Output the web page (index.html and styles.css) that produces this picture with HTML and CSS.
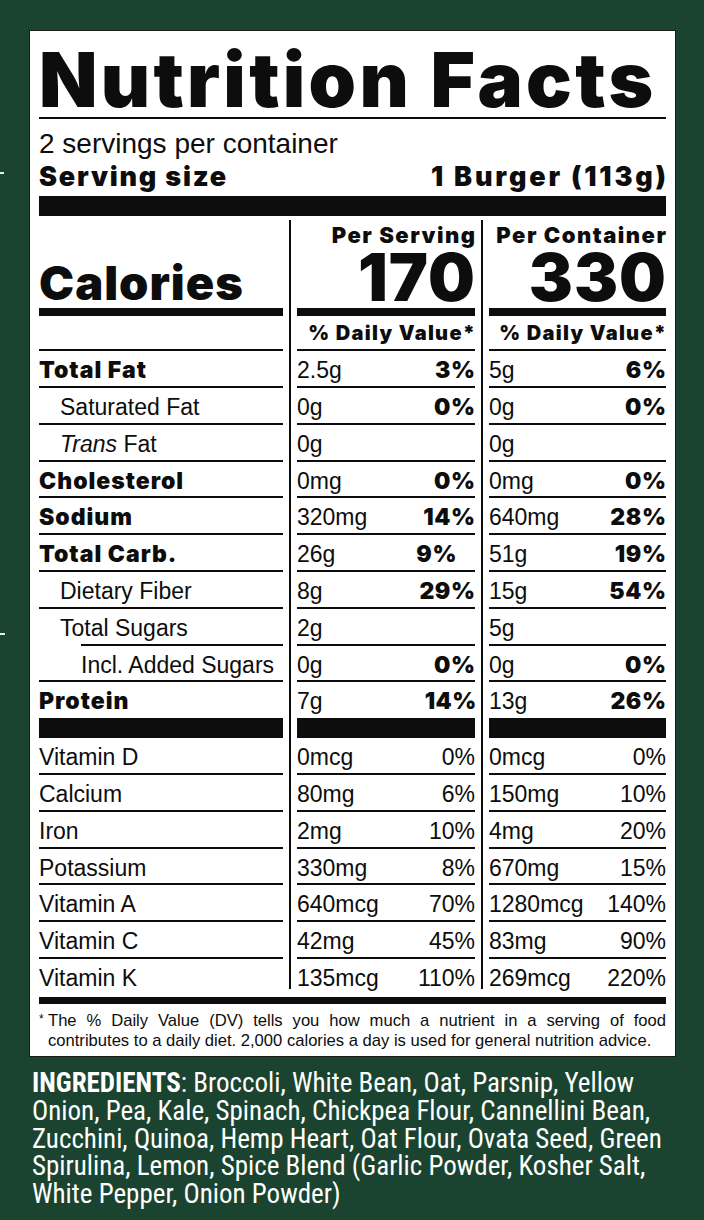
FILE: index.html
```html
<!DOCTYPE html>
<html lang="en">
<head>
<meta charset="utf-8">
<title>Nutrition Facts</title>
<link rel="stylesheet" href="styles.css">
</head>
<body>
<span class="speck speck-a"></span>
<span class="speck speck-b"></span>
<div class="label">
  <h1 class="title">Nutrition Facts</h1>
  <p class="servings">2 servings per container</p>
  <div class="serving-size"><span class="ss-name">Serving size</span><span class="ss-amount">1 Burger (113g)</span></div>
  <div class="bar-thick"></div>

  <div class="grid">
    <div class="sep sep1"></div>
    <div class="sep sep2"></div>

    <div class="cal-label">Calories</div>
    <div class="cal-head"><span class="per">Per Serving</span><span class="kcal">170</span></div>
    <div class="cal-head"><span class="per">Per Container</span><span class="kcal">330</span></div>

    <div class="barcell"></div><div class="barcell"></div><div class="barcell"></div>

    <div class="dv"></div>
    <div class="dv"><span class="dv-text">% Daily Value*</span></div>
    <div class="dv"><span class="dv-text">% Daily Value*</span></div>

    <div class="n b">Total Fat</div>
    <div class="v"><span>2.5g</span><span class="pct">3%</span></div>
    <div class="v"><span>5g</span><span class="pct">6%</span></div>

    <div class="n ind1">Saturated Fat</div>
    <div class="v"><span>0g</span><span class="pct">0%</span></div>
    <div class="v"><span>0g</span><span class="pct">0%</span></div>

    <div class="n ind1"><i>Trans</i> Fat</div>
    <div class="v"><span>0g</span></div>
    <div class="v"><span>0g</span></div>

    <div class="n b">Cholesterol</div>
    <div class="v"><span>0mg</span><span class="pct">0%</span></div>
    <div class="v"><span>0mg</span><span class="pct">0%</span></div>

    <div class="n b">Sodium</div>
    <div class="v"><span>320mg</span><span class="pct">14%</span></div>
    <div class="v"><span>640mg</span><span class="pct">28%</span></div>

    <div class="n b">Total Carb.</div>
    <div class="v"><span>26g</span><span class="pct pct-in">9%</span></div>
    <div class="v"><span>51g</span><span class="pct">19%</span></div>

    <div class="n ind1">Dietary Fiber</div>
    <div class="v"><span>8g</span><span class="pct">29%</span></div>
    <div class="v"><span>15g</span><span class="pct">54%</span></div>

    <div class="n ind1 line-ind">Total Sugars</div>
    <div class="v"><span>2g</span></div>
    <div class="v"><span>5g</span></div>

    <div class="n ind2">Incl. Added Sugars</div>
    <div class="v"><span>0g</span><span class="pct">0%</span></div>
    <div class="v"><span>0g</span><span class="pct">0%</span></div>

    <div class="n b nob">Protein</div>
    <div class="v nob"><span>7g</span><span class="pct pct-out">14%</span></div>
    <div class="v nob"><span>13g</span><span class="pct">26%</span></div>

    <div class="barcell"></div><div class="barcell"></div><div class="barcell"></div>

    <div class="n">Vitamin D</div>
    <div class="v"><span>0mcg</span><span>0%</span></div>
    <div class="v"><span>0mcg</span><span>0%</span></div>

    <div class="n">Calcium</div>
    <div class="v"><span>80mg</span><span>6%</span></div>
    <div class="v"><span>150mg</span><span>10%</span></div>

    <div class="n">Iron</div>
    <div class="v"><span>2mg</span><span>10%</span></div>
    <div class="v"><span>4mg</span><span>20%</span></div>

    <div class="n">Potassium</div>
    <div class="v"><span>330mg</span><span>8%</span></div>
    <div class="v"><span>670mg</span><span>15%</span></div>

    <div class="n">Vitamin A</div>
    <div class="v"><span>640mcg</span><span>70%</span></div>
    <div class="v"><span>1280mcg</span><span>140%</span></div>

    <div class="n">Vitamin C</div>
    <div class="v"><span>42mg</span><span>45%</span></div>
    <div class="v"><span>83mg</span><span>90%</span></div>

    <div class="n nob">Vitamin K</div>
    <div class="v nob"><span>135mcg</span><span>110%</span></div>
    <div class="v nob"><span>269mcg</span><span>220%</span></div>
  </div>

  <div class="bar-bottom"></div>
  <p class="footnote">
    <span class="fn-l1"><span class="star">*</span>The % Daily Value (DV) tells you how much a nutrient in a serving of food</span>
    <span class="fn-l2">contributes to a daily diet. 2,000 calories a day is used for general nutrition advice.</span>
  </p>
</div>

<p class="ingredients"><span class="ing-line"><b>INGREDIENTS</b>: Broccoli, White Bean, Oat, Parsnip, Yellow</span><span class="ing-line">Onion, Pea, Kale, Spinach, Chickpea Flour, Cannellini Bean,</span><span class="ing-line">Zucchini, Quinoa, Hemp Heart, Oat Flour, Ovata Seed, Green</span><span class="ing-line">Spirulina, Lemon, Spice Blend (Garlic Powder, Kosher Salt,</span><span class="ing-line">White Pepper, Onion Powder)</span></p>
</body>
</html>
```

FILE: styles.css
```css
* {
  box-sizing: border-box;
  margin: 0;
  padding: 0;
}

html, body {
  width: 704px;
  height: 1220px;
}

body {
  position: relative;
  overflow: hidden;
  background: #1b4430;
  font-family: "Liberation Sans", Arial, sans-serif;
  color: #0d0d0d;
}

.speck {
  position: absolute;
  left: 0;
  height: 2px;
  background: #e6ede8;
}
.speck-a { top: 172px; width: 4px; }
.speck-b { top: 633px; width: 5px; }

.label {
  margin: 30px 0 0 29px;
  width: 647px;
  background: #fff;
  border: 1px solid #1a1a1a;
  padding: 10px 9px 6px 9px;
}

.title {
  font-family: "Inter", "Roboto", sans-serif;
  font-weight: 900;
  font-size: 76px;
  line-height: 76px;
  height: 78px;
  letter-spacing: 3.3px;
  white-space: nowrap;
  border-bottom: 2px solid #0d0d0d;
}

.servings {
  margin-top: 11px;
  font-size: 28px;
  line-height: 28px;
}

.serving-size {
  margin-top: 6px;
  display: flex;
  justify-content: space-between;
  font-family: "Inter", "Roboto", sans-serif;
  font-weight: 900;
  font-size: 27px;
  line-height: 26px;
  white-space: nowrap;
}
.ss-name {
  letter-spacing: 1.8px;
}
.ss-amount {
  letter-spacing: 2.8px;
  margin-right: -2.8px;
}

.bar-thick {
  margin-top: 6px;
  height: 20px;
  background: #0d0d0d;
}

.grid {
  display: grid;
  grid-template-columns: 244px 14px 178px 14px 177px;
  grid-template-rows:
    92px 8px 35px
    37px 37px 37px 36px 37px 37px 37px 37px 36px
    36px 20px
    37px 37px 37px 36px 37px 37px 30px;
}

.sep {
  grid-row: 1 / -1;
  width: 2px;
  justify-self: center;
  margin-top: 4px;
  background: #0d0d0d;
}
.sep1 { grid-column: 2; }
.sep2 { grid-column: 4; }

.cal-label {
  display: flex;
  align-items: flex-end;
  padding-bottom: 2px;
  font-family: "Inter", "Roboto", sans-serif;
  font-weight: 900;
  font-size: 47px;
  line-height: 47px;
  letter-spacing: 1px;
}

.cal-head {
  display: flex;
  flex-direction: column;
  align-items: flex-end;
  padding-top: 7px;
  font-family: "Inter", "Roboto", sans-serif;
  font-weight: 900;
}
.per {
  display: block;
  font-size: 22px;
  line-height: 24px;
  letter-spacing: 1.5px;
  margin-right: -1.5px;
  white-space: nowrap;
}
.kcal {
  display: block;
  margin-top: 2px;
  font-size: 66px;
  line-height: 56px;
  letter-spacing: 1px;
  margin-right: -1px;
}

.barcell {
  background: #0d0d0d;
}

.dv {
  padding-top: 7px;
  text-align: right;
  font-family: "Inter", "Roboto", sans-serif;
  font-weight: 900;
  font-size: 20px;
  line-height: 20px;
  white-space: nowrap;
  border-bottom: 2px solid #0d0d0d;
}
.dv-text {
  letter-spacing: 1.3px;
  margin-right: -1.3px;
}

.n, .v {
  padding-top: 9px;
  font-size: 23px;
  line-height: 20px;
  white-space: nowrap;
  border-bottom: 2px solid #0d0d0d;
}

.v {
  display: flex;
  justify-content: space-between;
}

.b, .pct {
  font-family: "Inter", "Roboto", sans-serif;
  font-weight: 900;
}
.b {
  letter-spacing: 1px;
}
.pct {
  letter-spacing: 0.6px;
  margin-right: -0.6px;
}

.ind1 { padding-left: 21px; }
.ind2 { padding-left: 42px; }

.line-ind {
  border-bottom: none;
  background: linear-gradient(#0d0d0d, #0d0d0d) no-repeat right bottom / calc(100% - 42px) 2px;
}

.pct-in { margin-right: 18px; }
.pct-out { margin-right: -2px; }

.nob { border-bottom: none; }

.bar-bottom {
  margin-top: 8px;
  height: 7px;
  background: #0d0d0d;
}

.footnote {
  margin-top: 6px;
  font-size: 16.6px;
  line-height: 19.5px;
}
.fn-l1 {
  display: block;
  text-align: justify;
  text-align-last: justify;
}
.star {
  display: inline-block;
  width: 9px;
  font-size: 12px;
  vertical-align: 3px;
}
.fn-l2 {
  display: block;
  padding-left: 9px;
  white-space: nowrap;
}

.ingredients {
  margin: 13px 0 0 32px;
  color: #fff;
  font-family: "Roboto Condensed", "Liberation Sans Narrow", "DejaVu Sans Condensed", sans-serif;
  font-size: 27px;
  white-space: nowrap;
}
.ing-line {
  display: block;
  height: 27.75px;
  line-height: 27.75px;
}
.ingredients b {
  font-weight: 700;
}
```
